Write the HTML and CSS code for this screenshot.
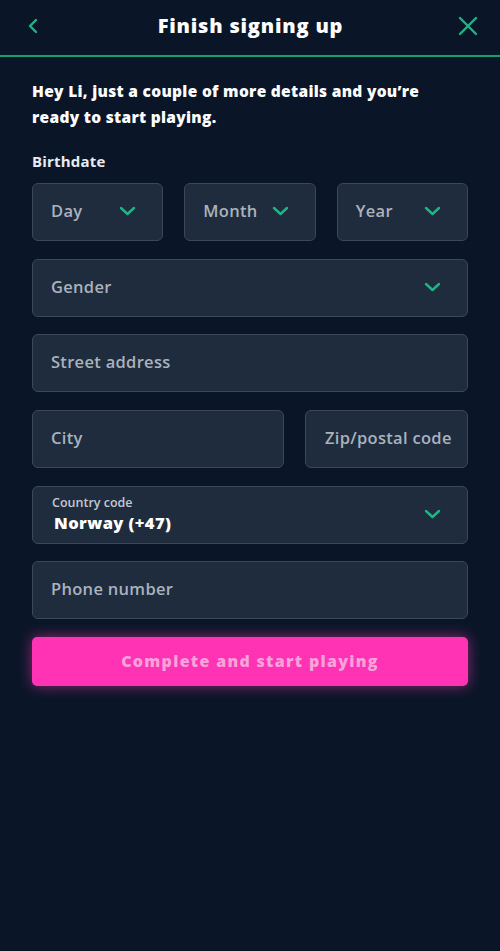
FILE: index.html
```html
<!DOCTYPE html>
<html>
<head>
<meta charset="utf-8">
<link rel="stylesheet" href="styles.css">
</head>
<body>
<div class="page">
  <header class="topbar">
    <button class="icon-btn back" aria-label="Back">
      <svg width="12" height="16" viewBox="0 0 12 16"><path d="M9 2 L3 8 L9 14" fill="none" stroke="#1db585" stroke-width="2.4" stroke-linecap="round" stroke-linejoin="round"/></svg>
    </button>
    <h1 class="title">Finish signing up</h1>
    <button class="icon-btn close" aria-label="Close">
      <svg width="20" height="20" viewBox="0 0 20 20"><path d="M2 2 L18 18 M18 2 L2 18" fill="none" stroke="#1db585" stroke-width="2.4" stroke-linecap="round"/></svg>
    </button>
  </header>

  <main class="content">
    <p class="intro">Hey Li, just a couple of more details and you’re ready to start playing.</p>
    <div class="label">Birthdate</div>
    <div class="row three">
      <div class="field select"><span class="ph">Day</span><svg class="chev" width="17" height="10" viewBox="0 0 17 10"><path d="M2 2 L8.5 8 L15 2" fill="none" stroke="#1db585" stroke-width="2.4" stroke-linecap="round" stroke-linejoin="round"/></svg></div>
      <div class="field select"><span class="ph">Month</span><svg class="chev" width="17" height="10" viewBox="0 0 17 10"><path d="M2 2 L8.5 8 L15 2" fill="none" stroke="#1db585" stroke-width="2.4" stroke-linecap="round" stroke-linejoin="round"/></svg></div>
      <div class="field select"><span class="ph">Year</span><svg class="chev" width="17" height="10" viewBox="0 0 17 10"><path d="M2 2 L8.5 8 L15 2" fill="none" stroke="#1db585" stroke-width="2.4" stroke-linecap="round" stroke-linejoin="round"/></svg></div>
    </div>
    <div class="field select"><span class="ph">Gender</span><svg class="chev" width="17" height="10" viewBox="0 0 17 10"><path d="M2 2 L8.5 8 L15 2" fill="none" stroke="#1db585" stroke-width="2.4" stroke-linecap="round" stroke-linejoin="round"/></svg></div>
    <div class="field"><span class="ph">Street address</span></div>
    <div class="row two">
      <div class="field"><span class="ph">City</span></div>
      <div class="field zip"><span class="ph">Zip/postal code</span></div>
    </div>
    <div class="field select country">
      <div class="stack">
        <span class="small">Country code</span>
        <span class="value">Norway (+47)</span>
      </div>
      <svg class="chev" width="17" height="10" viewBox="0 0 17 10"><path d="M2 2 L8.5 8 L15 2" fill="none" stroke="#1db585" stroke-width="2.4" stroke-linecap="round" stroke-linejoin="round"/></svg>
    </div>
    <div class="field"><span class="ph">Phone number</span></div>
    <button class="cta">Complete and start playing</button>
  </main>
</div>
</body>
</html>
```
FILE: styles.css
```css
* { box-sizing: border-box; }
html, body { margin: 0; padding: 0; }
body {
  background: #0a1628;
  font-family: "Open Sans", "Lato", "Liberation Sans", sans-serif;
  color: #fff;
  width: 500px;
  height: 951px;
  overflow: hidden;
}
.page { width: 500px; }
.topbar {
  height: 57px;
  display: flex;
  align-items: center;
  justify-content: space-between;
  padding: 0 22px 0 23px;
  border-bottom: 2px solid #17a06e;
}
.icon-btn {
  background: none;
  border: 0;
  padding: 0;
  width: 20px;
  height: 20px;
  display: flex;
  align-items: center;
  justify-content: center;
  margin-top: -3px;
}
.title {
  margin: 0;
  font-size: 20px;
  font-weight: 800;
  letter-spacing: 0.8px;
  margin-top: -5px;
}
.content {
  padding: 21px 32px 0 32px;
  display: flex;
  flex-direction: column;
  gap: 17.6px;
}
.intro {
  margin: 0;
  font-size: 15.5px;
  font-weight: 800;
  line-height: 26px;
  letter-spacing: 0.3px;
  padding-right: 20px;
}
.label {
  font-size: 15px;
  font-weight: 700;
  margin-top: 4px;
  margin-bottom: -4px;
  color: #e8ecf0;
  line-height: 18px;
  letter-spacing: 0.2px;
}
.row { display: grid; gap: 21px; }
.row.three { grid-template-columns: 1fr 1fr 1fr; }
.row.two { grid-template-columns: 252px 1fr; }
.field {
  height: 58px;
  background: #1f2c3e;
  border: 1.5px solid #3c4859;
  border-radius: 6px;
  display: flex;
  align-items: center;
  justify-content: space-between;
  padding: 0 26px 0 18px;
}
.ph {
  font-size: 16.5px;
  font-weight: 600;
  color: #aab2bd;
  letter-spacing: 0.3px;
  margin-top: -3px;
}
.zip { padding: 0 0 0 19px; }
.zip .ph { white-space: nowrap; }
.chev { flex: none; margin-top: -2px; }
.country { padding-left: 19px; }
.stack { display: flex; flex-direction: column; margin-top: 0; }
.small { font-size: 12.5px; font-weight: 600; color: #c3c9d1; line-height: 16px; }
.value { font-size: 16.5px; font-weight: 800; color: #fff; line-height: 23px; padding-left: 2px; letter-spacing: 0.4px; }
.cta {
  height: 49px;
  border: 0;
  border-radius: 5px;
  background: #ff33b4;
  box-shadow: 0 0 14px rgba(255, 51, 180, 0.55);
  color: #f8a2d9;
  font-family: inherit;
  font-size: 16px;
  font-weight: 800;
  letter-spacing: 1.3px;
  margin-top: 0;
}
```
